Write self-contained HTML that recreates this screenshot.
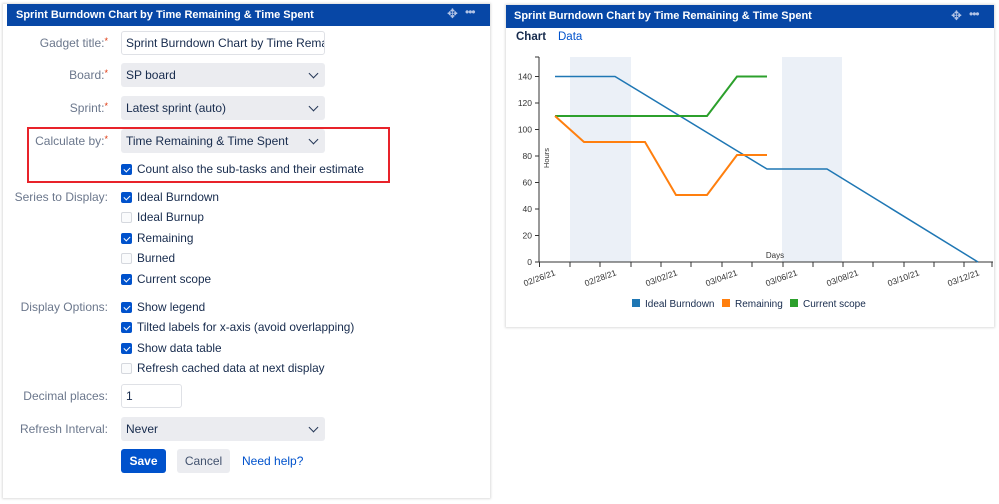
<!DOCTYPE html><html><head><style>
body{margin:0;width:999px;height:504px;background:#fff;font-family:"Liberation Sans",Arial,sans-serif;position:relative;overflow:hidden}
.a{position:absolute}
.panel{position:absolute;background:#fff;box-shadow:0 0 2px 1px #ddd}
.hdr{position:absolute;background:#0747a6;color:#fff;font-weight:bold;font-size:11px;line-height:22px;padding-left:9px;box-sizing:border-box}
.lbl{position:absolute;right:891px;font-size:12px;color:#6b778c;text-align:right;white-space:nowrap}
.lbl i{color:#de350b;font-style:normal;font-size:9px;vertical-align:top}
.sel{position:absolute;left:121px;width:204px;height:24px;background:#ebecf0;border-radius:3px;font-size:12px;color:#172b4d;line-height:24px;padding-left:5px;box-sizing:border-box}
.sel:after{content:"";position:absolute;right:8px;top:7px;width:6px;height:6px;border-right:1.6px solid #253858;border-bottom:1.6px solid #253858;transform:rotate(45deg)}
.cb{position:absolute;left:121px;font-size:11.8px;color:#172b4d;white-space:nowrap;line-height:14px}
.cb b{display:inline-block;width:11px;height:11px;border-radius:2px;vertical-align:-2px;margin-right:5px;box-sizing:border-box}
.on b{background:#0052cc;position:relative}
.on b:after{content:"";position:absolute;left:3.5px;top:1.5px;width:3px;height:5px;border-right:1.5px solid #fff;border-bottom:1.5px solid #fff;transform:rotate(45deg)}
.off b{border:1px solid #d5d8de;background:#fafbfc}
</style></head><body>
<div class="panel" style="left:3px;top:4px;width:487px;height:494px"></div>
<div class="hdr" style="left:7px;top:4px;width:483px;height:22px">Sprint Burndown Chart by Time Remaining &amp; Time Spent</div>
<div class="a" style="left:447px;top:6px;color:#b3c4e6;font-size:13px">✥</div>
<div class="a" style="left:465px;top:5px;color:#b3c4e6;font-size:12px;letter-spacing:-1px">•••</div>

<div class="lbl" style="top:36px">Gadget title:<i>*</i></div>
<div class="a" style="left:121px;top:31px;width:204px;height:24px;border:1px solid #dfe1e6;border-radius:3px;box-sizing:border-box;font-size:12px;line-height:22px;padding-left:4px;color:#172b4d;overflow:hidden;white-space:nowrap">Sprint Burndown Chart by Time Remai</div>
<div class="lbl" style="top:68px">Board:<i>*</i></div><div class="sel" style="top:63px">SP board</div>
<div class="lbl" style="top:101px">Sprint:<i>*</i></div><div class="sel" style="top:96px">Latest sprint (auto)</div>
<div class="lbl" style="top:134px">Calculate by:<i>*</i></div><div class="sel" style="top:129px">Time Remaining &amp; Time Spent</div>
<div class="cb on" style="top:162px"><b></b>Count also the sub-tasks and their estimate</div>
<div class="a" style="left:27px;top:127px;width:363px;height:56px;border:2px solid #e8232a;box-sizing:border-box"></div>

<div class="lbl" style="top:190px">Series to Display:</div>
<div class="cb on" style="top:190px"><b></b>Ideal Burndown</div>
<div class="cb off" style="top:210px"><b></b>Ideal Burnup</div>
<div class="cb on" style="top:231px"><b></b>Remaining</div>
<div class="cb off" style="top:251px"><b></b>Burned</div>
<div class="cb on" style="top:272px"><b></b>Current scope</div>
<div class="lbl" style="top:300px">Display Options:</div>
<div class="cb on" style="top:300px"><b></b>Show legend</div>
<div class="cb on" style="top:320px"><b></b>Tilted labels for x-axis (avoid overlapping)</div>
<div class="cb on" style="top:341px"><b></b>Show data table</div>
<div class="cb off" style="top:361px"><b></b>Refresh cached data at next display</div>
<div class="lbl" style="top:389px">Decimal places:</div>
<div class="a" style="left:121px;top:384px;width:61px;height:24px;border:1px solid #dfe1e6;border-radius:3px;box-sizing:border-box;font-size:12px;line-height:22px;padding-left:4px;color:#172b4d">1</div>
<div class="lbl" style="top:422px">Refresh Interval:</div><div class="sel" style="top:417px">Never</div>
<div class="a" style="left:121px;top:449px;width:45px;height:24px;background:#0052cc;border-radius:3px;color:#fff;font-weight:bold;font-size:12px;line-height:24px;text-align:center">Save</div>
<div class="a" style="left:177px;top:449px;width:53px;height:24px;background:#ebecf0;border-radius:3px;color:#42526e;font-size:12px;line-height:24px;text-align:center">Cancel</div>
<div class="a" style="left:242px;top:449px;color:#0052cc;font-size:12px;line-height:24px">Need help?</div>

<div class="panel" style="left:506px;top:5px;width:488px;height:322px"></div>
<div class="hdr" style="left:506px;top:5px;width:488px;height:23px;line-height:23px;padding-left:8px">Sprint Burndown Chart by Time Remaining &amp; Time Spent</div>
<div class="a" style="left:951px;top:8px;color:#b3c4e6;font-size:13px">✥</div>
<div class="a" style="left:969px;top:7px;color:#b3c4e6;font-size:12px;letter-spacing:-1px">•••</div>
<div class="a" style="left:516px;top:31px;font-size:11.5px;color:#172b4d;font-weight:bold">Chart</div>
<div class="a" style="left:558px;top:31px;font-size:11.5px;color:#0052cc">Data</div>

<svg class="a" style="left:0;top:0" width="999" height="504">
<rect x="570" y="57" width="61" height="205" fill="#ebf0f7"/>
<rect x="782" y="57" width="60" height="205" fill="#ebf0f7"/>
<g stroke="#333" stroke-width="1" fill="none">
<line x1="539" y1="57" x2="539" y2="262"/><line x1="535" y1="57" x2="539" y2="57"/>
<line x1="539" y1="262" x2="993" y2="262"/>
<path d="M535 262H539M535 235.5H539M535 209H539M535 182.5H539M535 156H539M535 129.5H539M535 103H539M535 76.5H539"/>
<path d="M539.5 262v5M570 262v5M600 262v5M631 262v5M661 262v5M691 262v5M722 262v5M752 262v5M783 262v5M813 262v5M843 262v5M873 262v5M904 262v5M934 262v5M964 262v5M992 262v5"/>
</g>
<g font-size="8.5" fill="#333" text-anchor="end" font-family="Liberation Sans">
<text x="532" y="265">0</text><text x="532" y="238.5">20</text><text x="532" y="212">40</text><text x="532" y="185.5">60</text><text x="532" y="159">80</text><text x="532" y="132.5">100</text><text x="532" y="106">120</text><text x="532" y="79.5">140</text>
<text transform="translate(549,158) rotate(-90)" text-anchor="middle" font-size="7.5">Hours</text>
<text x="775" y="258" text-anchor="middle" font-size="8">Days</text>
<g font-size="8.5">
<text transform="translate(556,275) rotate(-20)">02/26/21</text>
<text transform="translate(617,275) rotate(-20)">02/28/21</text>
<text transform="translate(678,275) rotate(-20)">03/02/21</text>
<text transform="translate(738,275) rotate(-20)">03/04/21</text>
<text transform="translate(798,275) rotate(-20)">03/06/21</text>
<text transform="translate(859,275) rotate(-20)">03/08/21</text>
<text transform="translate(920,275) rotate(-20)">03/10/21</text>
<text transform="translate(980,275) rotate(-20)">03/12/21</text>
</g></g>
<polyline fill="none" stroke="#1f77b4" stroke-width="1.5" points="555,76.5 615,76.5 767,169 827,169 978,262"/>
<polyline fill="none" stroke="#2ca02c" stroke-width="2" points="555,116 707,116 737,76.5 767,76.5"/>
<polyline fill="none" stroke="#ff7f0e" stroke-width="2" points="555,116 584,142 645,142 676,195 707,195 737,155 767,155"/>
<rect x="632" y="299" width="8" height="8" fill="#1f77b4"/>
<rect x="722" y="299" width="8" height="8" fill="#ff7f0e"/>
<rect x="790" y="299" width="8" height="8" fill="#2ca02c"/>
<g font-size="10" fill="#172b4d" font-family="Liberation Sans">
<text x="645" y="307">Ideal Burndown</text><text x="735" y="307">Remaining</text><text x="803" y="307">Current scope</text>
</g>
</svg>
</body></html>
